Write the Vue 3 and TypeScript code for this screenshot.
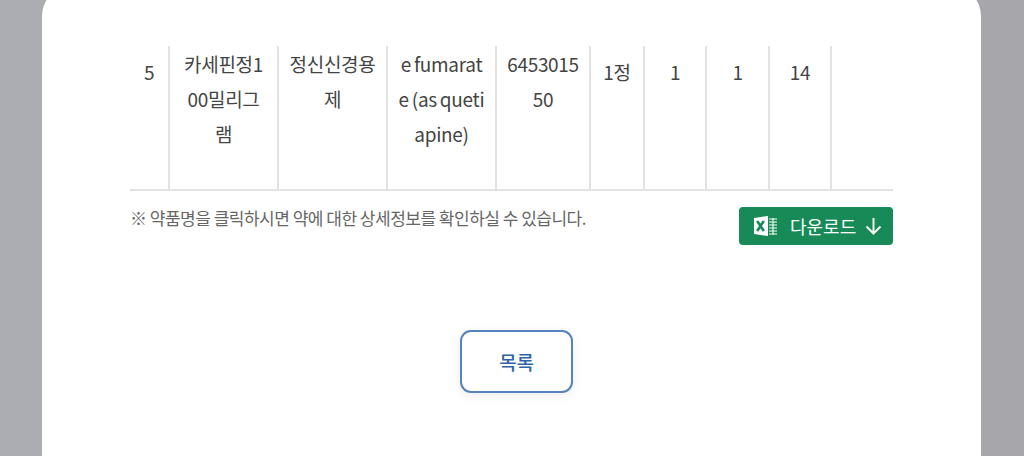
<script setup lang="ts">
interface Cell {
  text: string
  low?: boolean
  wrap?: boolean
  latin?: boolean
}

const cells: Cell[] = [
  { text: '5', low: true },
  { text: '카세핀정100밀리그램', wrap: true },
  { text: '정신신경용제', wrap: true },
  { text: 'e fumarate (as quetiapine)', wrap: true, latin: true },
  { text: '645301550', wrap: true },
  { text: '1정', low: true },
  { text: '1', low: true },
  { text: '1', low: true },
  { text: '14', low: true },
  { text: '' },
]
</script>

<template>
  <div class="page">
    <section class="card">
      <table class="table">
        <colgroup>
          <col class="c1" /><col class="c2" /><col class="c3" /><col class="c4" /><col class="c5" />
          <col class="c6" /><col class="c7" /><col class="c8" /><col class="c9" /><col />
        </colgroup>
        <tbody>
          <tr>
            <td v-for="(cell, i) in cells" :key="i" :class="{ low: cell.low, wrap: cell.wrap, latin: cell.latin }">{{ cell.text }}</td>
          </tr>
        </tbody>
      </table>

      <div class="foot">
        <p class="note">※ 약품명을 클릭하시면 약에 대한 상세정보를 확인하실 수 있습니다.</p>
        <button class="excel" type="button">
          <svg class="xls" width="26" height="22" viewBox="0 0 26 22" aria-hidden="true">
            <path d="M1 3 L15 1 V21 L1 19 Z" fill="#fff" />
            <path d="M4.2 6 L10.8 16 M10.8 6 L4.2 16" stroke="#178a58" stroke-width="2.6" fill="none" />
            <path d="M16 4 H24 M16 7 H24 M16 10 H24 M16 13 H24 M16 16 H24 M16 19 H24" stroke="#fff" stroke-width="1.1" fill="none" />
            <path d="M20 3 V20" stroke="#fff" stroke-width="1" fill="none" />
          </svg>
          <span class="label">다운로드</span>
          <svg class="arrow" width="17" height="18" viewBox="0 0 17 18" aria-hidden="true">
            <path d="M8.5 1 V16.5 M1.5 9.5 L8.5 16.5 L15.5 9.5" stroke="#f2f7f4" stroke-width="2" fill="none" />
          </svg>
        </button>
      </div>

      <div class="actions">
        <button class="list" type="button">목록</button>
      </div>
    </section>
  </div>
</template>

<style scoped>
.page {
  height: 456px;
  overflow: hidden;
  padding: 0 43px 0 42px;
  box-sizing: border-box;
  background: linear-gradient(to right, #acadb2, #a6a6ab);
  font-family: "Noto Sans CJK KR", "Noto Sans", sans-serif;
}
.card {
  margin-top: -14px;
  height: 520px;
  padding: 60px 88px 0;
  box-sizing: border-box;
  background: #fff;
  border-radius: 30px;
}
.table {
  width: 100%;
  table-layout: fixed;
  border-collapse: collapse;
  border-bottom: 2px solid #e2e2e2;
}
.c1 { width: 39px; }
.c2, .c3, .c4 { width: 109px; }
.c5 { width: 94px; }
.c6 { width: 54px; }
.c7 { width: 62px; }
.c8 { width: 63px; }
.c9 { width: 62px; }
td {
  height: 144px;
  padding: 0 10px;
  box-sizing: border-box;
  vertical-align: top;
  text-align: center;
  font-size: 19px;
  line-height: 35px;
  letter-spacing: -0.3px;
  color: #444;
  border-right: 2px solid #e2e2e2;
}
td:last-child { border-right: 0; }
.low { padding: 8px 0 0; }
.wrap { word-break: break-all; }
.latin { padding: 0 9px; word-spacing: -1px; }
.foot {
  display: flex;
  justify-content: space-between;
  align-items: flex-start;
  margin-top: 16px;
}
.note {
  margin: 0;
  font-size: 17px;
  line-height: 22px;
  letter-spacing: -0.5px;
  color: #666;
}
.excel {
  display: flex;
  align-items: center;
  width: 154px;
  height: 38px;
  padding: 0 0 0 14px;
  box-sizing: border-box;
  border: 0;
  border-radius: 4px;
  background: #178a58;
  color: #fff;
  font: inherit;
}
.label {
  margin-left: 11px;
  font-size: 18px;
  letter-spacing: 0;
}
.arrow { margin-left: 9px; }
.actions {
  display: flex;
  justify-content: center;
  margin-top: 85px;
  padding-left: 10px;
}
.list {
  width: 113px;
  height: 63px;
  box-sizing: border-box;
  border: 2px solid #5483bd;
  border-radius: 11px;
  background: #fff;
  box-shadow: 0 3px 12px rgba(0, 0, 0, 0.07);
  color: #2f64a8;
  font: inherit;
  font-size: 19px;
  font-weight: 500;
  letter-spacing: -0.3px;
}
</style>
